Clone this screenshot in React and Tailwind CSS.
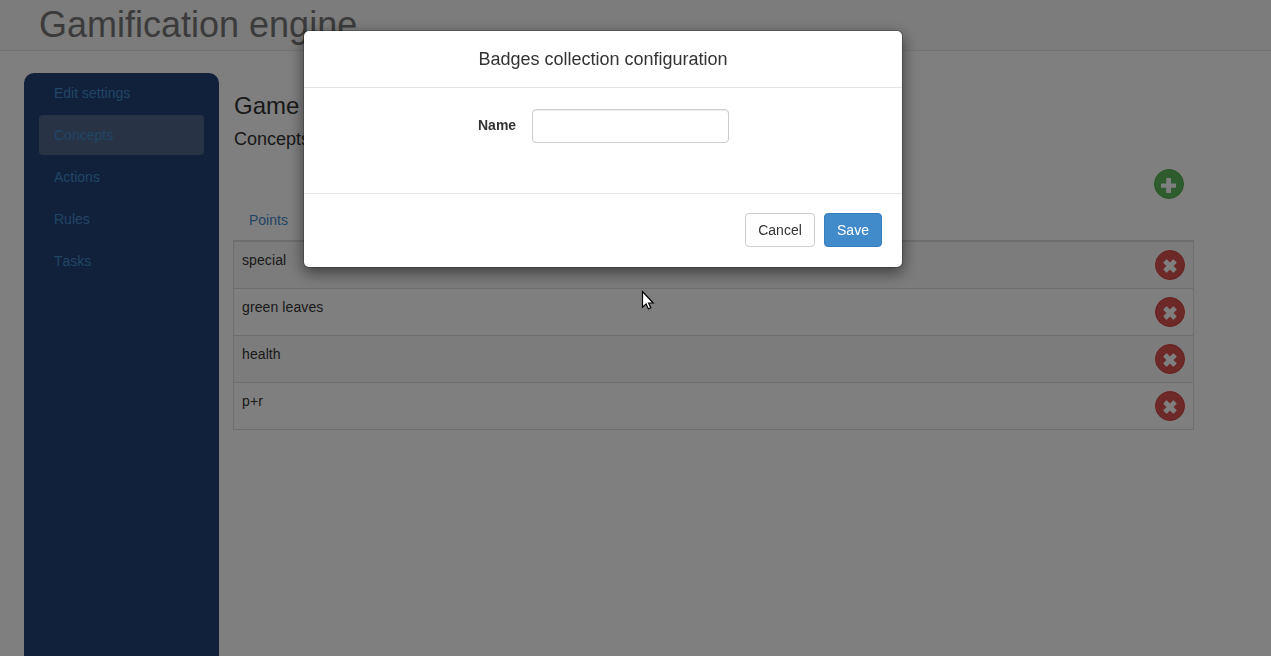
import React from "react";

const menu = ["Edit settings", "Concepts", "Actions", "Rules", "Tasks"];
const badges = ["special", "green leaves", "health", "p+r"];

function PlusIcon() {
  return (
    <svg className="mt-[2px] mr-px h-[15px] w-[15px]" viewBox="0 0 15 15" fill="#fff">
      <path d="M5.6 0h4q.4 0 .4.4V5.500h4.600q.4 0 .4.4v3.400q0 .4-.4.4H10v4.900q0 .4-.4.4h-4q-.4 0-.4-.4V9.700H.4Q0 9.700 0 9.300V5.900q0-.4.4-.4h4.800V.4q0-.4.4-.4z" />
    </svg>
  );
}

function RemoveIcon() {
  return (
    <svg className="h-[14px] w-[14px]" viewBox="-0.500 -0.500 14 14" fill="#fff">
      <path d="M3.500 0 6.500 3 9.500 0q.4-.3.800 0L13 2.700q.3.400 0 .800L10 6.500l3 3q.3.400 0 .800L10.300 13q-.4.300-.800 0L6.500 10l-3 3q-.4.300-.800 0L0 10.300q-.3-.400 0-.800L3 6.500 0 3.500q-.3-.400 0-.800L2.700 0q.4-.3.800 0z" />
    </svg>
  );
}

function Sidebar() {
  return (
    <nav className="flex h-[600px] w-[195px] shrink-0 flex-col gap-[2px] rounded-t-[10px] bg-[#224278] px-[15px]">
      {menu.map((item) => (
        <a
          key={item}
          className={
            item === "Concepts"
              ? "block h-10 rounded bg-[#50668c] px-[15px] py-[10px] leading-5 text-[#428bca]"
              : "block h-10 rounded px-[15px] py-[10px] leading-5 text-[#428bca]"
          }
        >
          {item}
        </a>
      ))}
    </nav>
  );
}

function Badges() {
  return (
    <div className="w-[961px] border border-t-2 border-[#ddd]">
      {badges.map((name) => (
        <div
          key={name}
          className="flex h-[47px] justify-between border-b border-[#ddd] px-2 pt-2 last:h-[46px] last:border-b-0 odd:bg-[#f9f9f9]"
        >
          <span className="leading-5 tracking-[0.1px]">{name}</span>
          <button className="flex h-[30px] w-[30px] items-center justify-center rounded-full border border-[#d43f3a] bg-[#d9534f] pt-[2px]">
            <RemoveIcon />
          </button>
        </div>
      ))}
    </div>
  );
}

function Modal() {
  return (
    <div className="fixed inset-0 flex items-start justify-center bg-black/50 pt-[30px]">
      <div className="mr-[65px] w-[600px] rounded-md border border-black/20 bg-white bg-clip-padding shadow-[0_5px_15px_rgba(0,0,0,0.5)]">
        <div className="flex h-[57px] items-center justify-center border-b border-[#e5e5e5]">
          <h4 className="text-[18px] leading-[26px]">Badges collection configuration</h4>
        </div>
        <div className="flex h-[105px] items-start pt-[21px] pl-[174px]">
          <label className="w-[54px] pt-[6px] leading-5 font-bold">Name</label>
          <input className="h-[34px] w-[197px] rounded border border-[#ccc] bg-white px-3 shadow-[inset_0_1px_1px_rgba(0,0,0,0.075)]" />
        </div>
        <div className="flex h-[74px] items-start justify-end gap-[9px] border-t border-[#e5e5e5] pt-[19px] pr-5">
          <button className="h-[34px] w-[70px] rounded border border-[#ccc] bg-white">Cancel</button>
          <button className="h-[34px] w-[58px] rounded border border-[#357ebd] bg-[#428bca] text-white">Save</button>
        </div>
      </div>
      <svg className="absolute top-[290px] left-[641px] h-[22px] w-[14px]" viewBox="0 0 14 22">
        <path d="M1.500 1.500v15.700l3.600-3.300 2.300 5 2.400-1.100-2.200-4.800h4.600z" fill="#fff" stroke="#000" strokeWidth="1.200" />
      </svg>
    </div>
  );
}

export default function App() {
  return (
    <div className="h-screen overflow-hidden bg-white font-['Liberation_Sans',Arial,sans-serif] text-[14px] text-[#333] [font-kerning:none]">
      <header className="h-[51px] border-b border-[#e7e7e7] bg-[#f8f8f8] pl-[39px]">
        <h1 className="text-[36px] leading-[50px] text-[#777]">Gamification engine</h1>
      </header>
      <div className="flex gap-[14px] pt-[22px] pl-6">
        <Sidebar />
        <main className="w-[961px]">
          <h3 className="mt-[19px] pl-px text-[24px] leading-[28px]">Game settings</h3>
          <h4 className="mt-[8px] pl-px text-[18px] leading-[22px]">Concepts</h4>
          <div className="mt-[19px] flex justify-end pr-[10px]">
            <button className="flex h-[30px] w-[30px] items-center justify-center rounded-full border border-[#4cae4c] bg-[#5cb85c]">
              <PlusIcon />
            </button>
          </div>
          <div className="flex h-[41px] items-end px-4 pb-[10px] leading-5 text-[#428bca]">Points</div>
          <Badges />
        </main>
      </div>
      <Modal />
    </div>
  );
}
